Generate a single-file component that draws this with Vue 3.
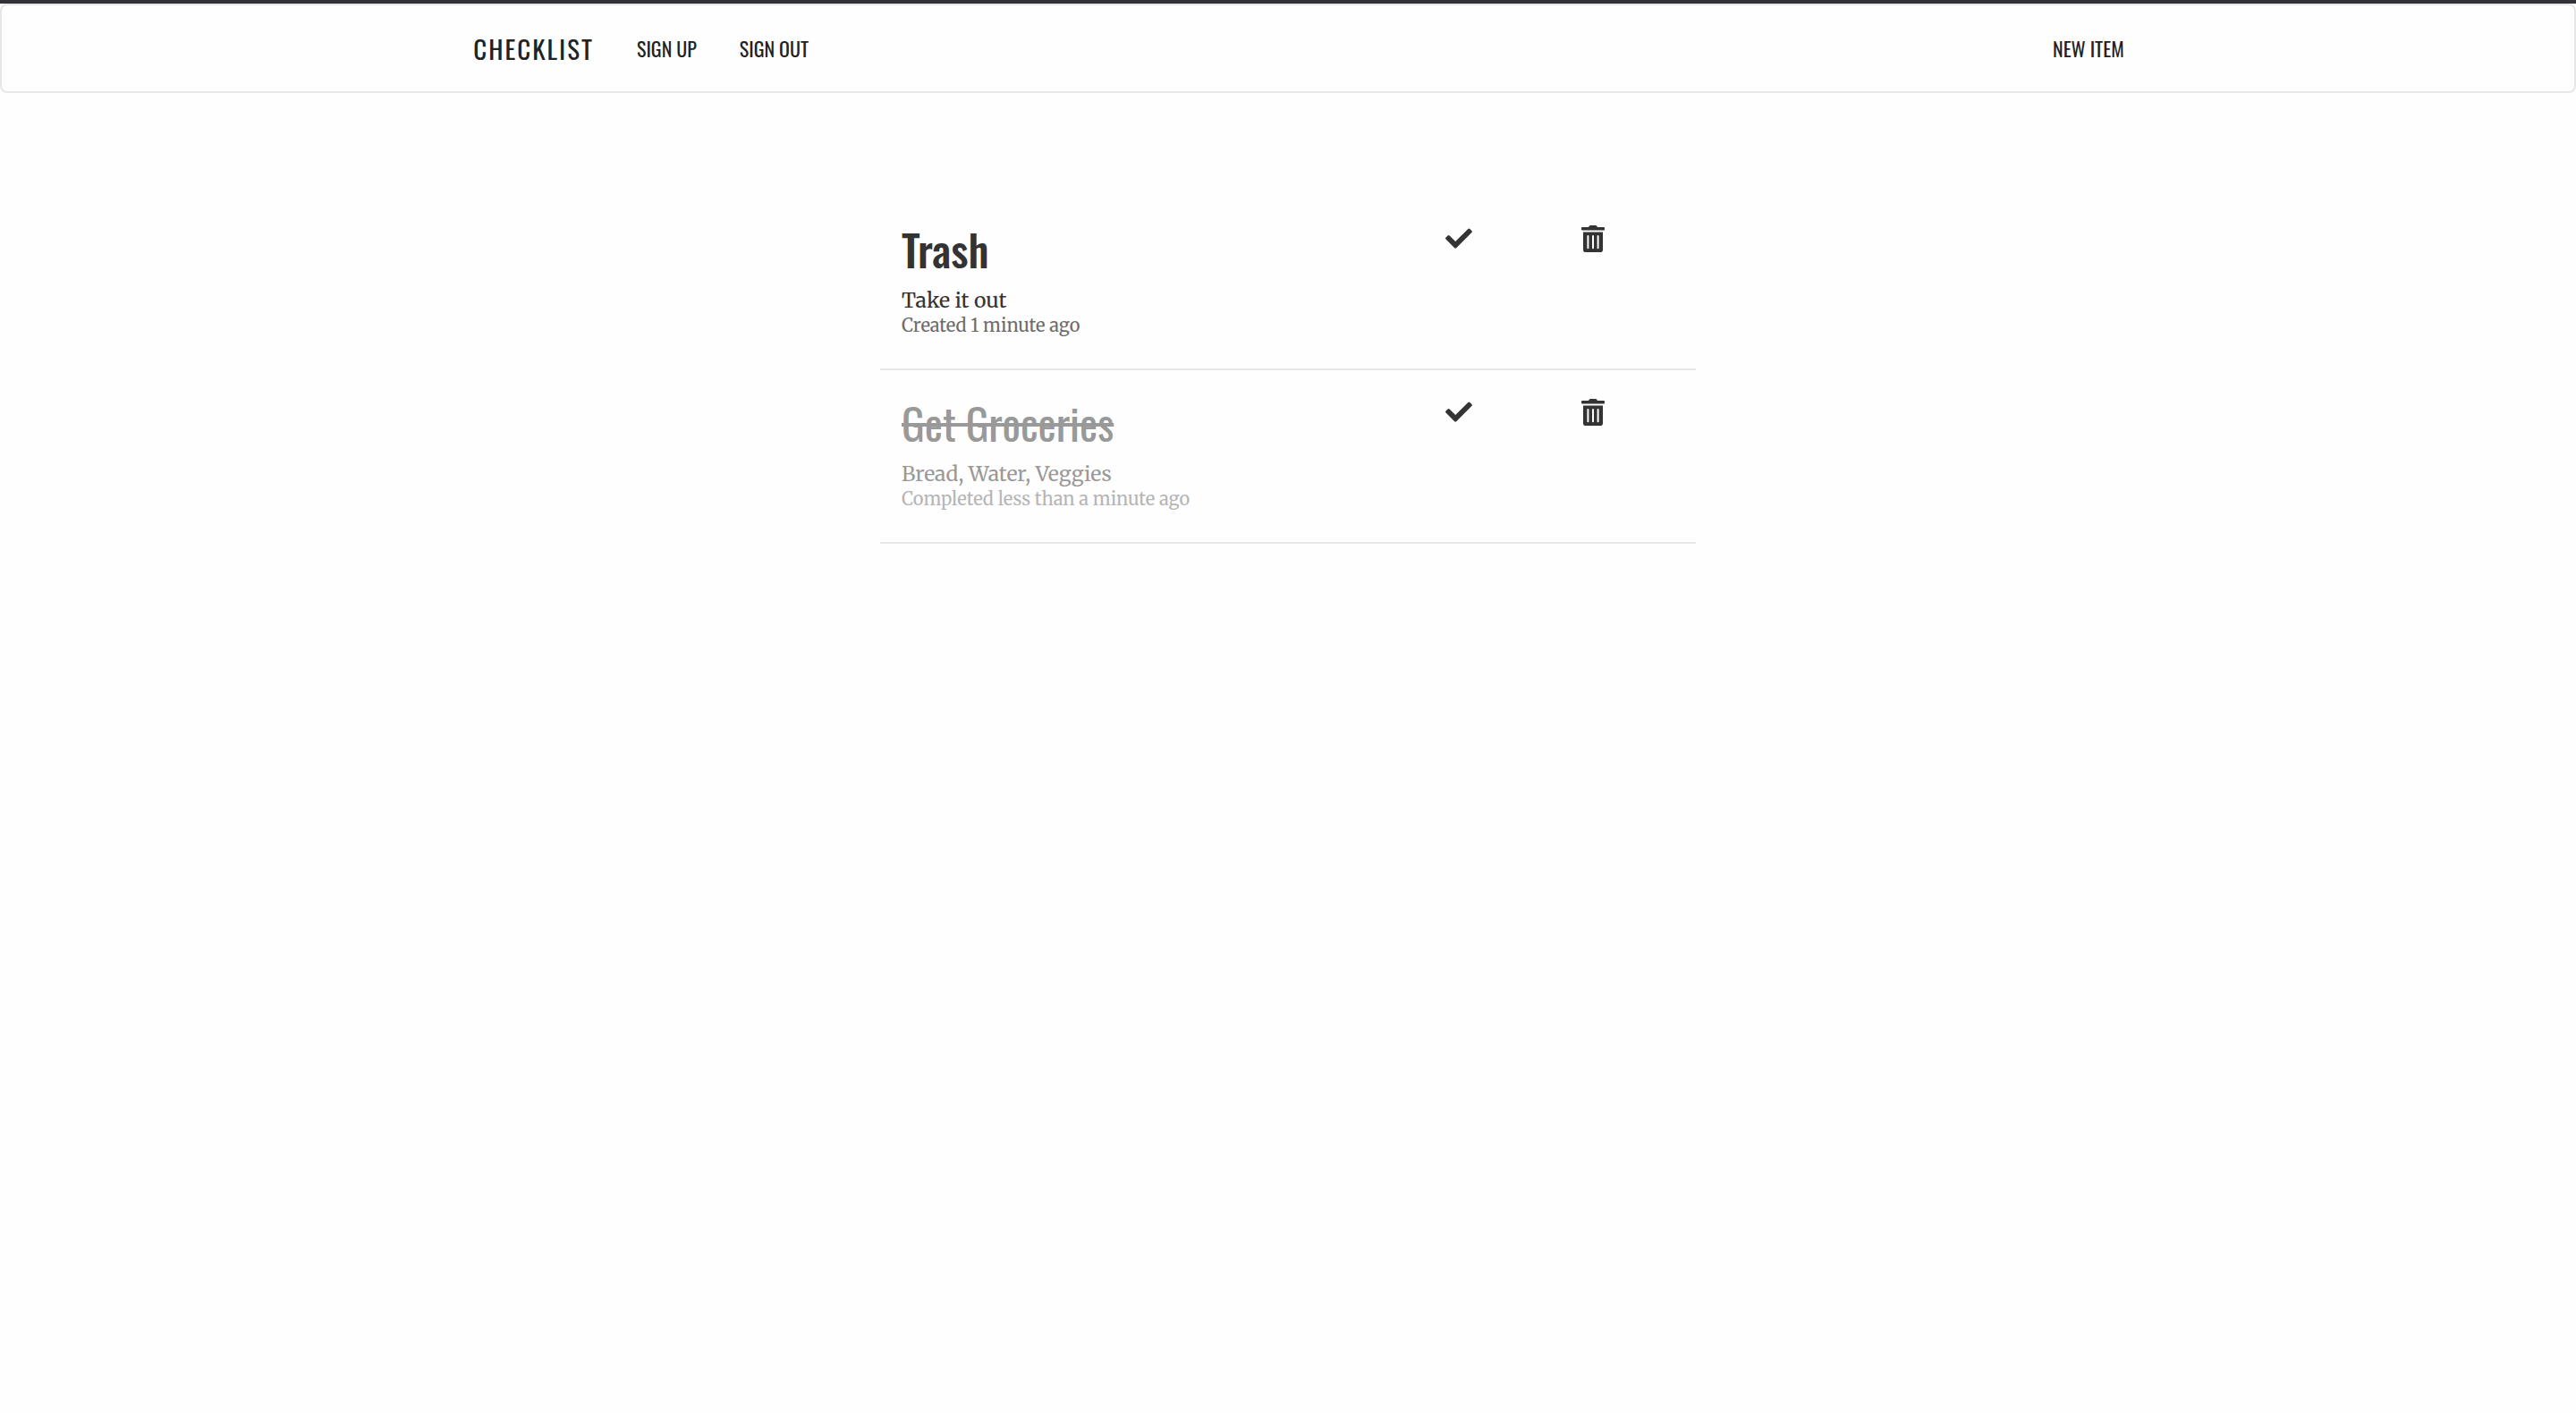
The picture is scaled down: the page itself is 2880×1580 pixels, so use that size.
<script setup>
import { ref } from 'vue'

const items = ref([
  { id: 1, title: 'Trash', description: 'Take it out', status: 'Created 1 minute ago', done: false },
  { id: 2, title: 'Get Groceries', description: 'Bread, Water, Veggies', status: 'Completed less than a minute ago', done: true },
])

function toggle(item) {
  item.done = !item.done
}

function remove(item) {
  items.value = items.value.filter((other) => other.id !== item.id)
}
</script>

<template>
  <div class="page">
    <header class="navbar">
      <nav class="container">
        <a class="brand" href="#">CHECKLIST</a>
        <a class="link" href="#">SIGN UP</a>
        <a class="link" href="#">SIGN OUT</a>
        <a class="link right" href="#">NEW ITEM</a>
      </nav>
    </header>

    <main class="list">
      <article v-for="item in items" :key="item.id" class="row" :class="{ done: item.done }">
        <div class="text">
          <h2>{{ item.title }}</h2>
          <p class="description">{{ item.description }}</p>
          <p class="status">{{ item.status }}</p>
        </div>
        <div class="action">
          <button type="button" aria-label="Complete" @click="toggle(item)">
            <svg viewBox="0 0 30 30" width="30" height="30" aria-hidden="true">
              <path d="M.5 15.5Q-.3 14.500.5 13.500L2.600 11.400Q3.600 10.500 4.600 11.400L11.200 17.900 25.300 4Q26.300 3.100 27.300 4L29.400 6.100Q30.200 7.100 29.400 8.100L12.200 25.300Q11.200 26.200 10.200 25.300Z" />
            </svg>
          </button>
        </div>
        <div class="action">
          <button type="button" aria-label="Delete" @click="remove(item)">
            <svg viewBox="0 0 26 30" width="26" height="30" aria-hidden="true">
              <path d="M1 2H8L8.800.700Q9.200 0 10 0H16Q16.800 0 17.200.700L18 2H25Q26 2 26 3V4.600Q26 5.600 25 5.600H1Q0 5.600 0 4.600V3Q0 2 1 2Z" />
              <path fill-rule="evenodd" d="M2 7.500H24V27.200Q24 30 21.200 30H4.800Q2 30 2 27.200ZM7.400 11Q6.400 11 6.400 12V25.200Q6.400 26.200 7.400 26.200T8.400 25.200V12Q8.400 11 7.400 11ZM13 11Q12 11 12 12V25.200Q12 26.200 13 26.200T14 25.200V12Q14 11 13 11ZM18.600 11Q17.600 11 17.600 12V25.200Q17.600 26.200 18.600 26.200T19.600 25.200V12Q19.600 11 18.600 11Z" />
            </svg>
          </button>
        </div>
      </article>
    </main>
  </div>
</template>

<style>
body {
  background: #fefefe;
}
</style>

<style scoped>
.page {
  border-top: 4px solid #313137;
}

.navbar {
  border: 2px solid #e7e7e7;
  border-radius: 8px;
}

.container {
  display: flex;
  align-items: center;
  box-sizing: border-box;
  width: 65%;
  height: 96px;
  margin: 0 auto;
}

.brand,
.link {
  padding: 0 24px;
  color: #222;
  font-family: "Oswald", "Liberation Sans Narrow", "Roboto Condensed", "Liberation Sans", sans-serif;
  font-size: 22px;
  line-height: 32px;
  text-decoration: none;
  white-space: nowrap;
}

.brand {
  font-size: 29px;
  letter-spacing: 2px;
}

.right {
  margin-left: auto;
  padding-right: 0;
}

.list {
  width: 912px;
  max-width: 100%;
  margin: 116px auto 0;
}

.row {
  display: grid;
  grid-template-columns: 4fr 1fr 1fr;
  padding: 32px 0 34px;
  border-bottom: 2px solid #e7e7e7;
}

.text,
.action {
  padding: 0 24px;
}

h2,
p {
  margin: 0;
}

h2 {
  margin-bottom: 16px;
  color: #333;
  font-family: "Oswald", "Liberation Sans Narrow", "Roboto Condensed", "Liberation Sans", sans-serif;
  font-size: 48px;
  font-weight: 500;
  line-height: 54px;
}

p {
  font-family: "Merriweather", "DejaVu Serif Condensed", "DejaVu Serif", serif;
  line-height: 28px;
}

.description {
  color: #333;
  font-size: 23px;
}

.status {
  color: #6c6c6c;
  font-size: 20px;
}

.done h2 {
  color: #999;
  font-weight: 400;
  text-decoration: line-through;
}

.done .description {
  color: #999;
}

.done .status {
  color: #b5b5b5;
}

button {
  display: block;
  padding: 0;
  border: 0;
  background: none;
  cursor: pointer;
}

svg {
  display: block;
  fill: #333;
}
</style>
